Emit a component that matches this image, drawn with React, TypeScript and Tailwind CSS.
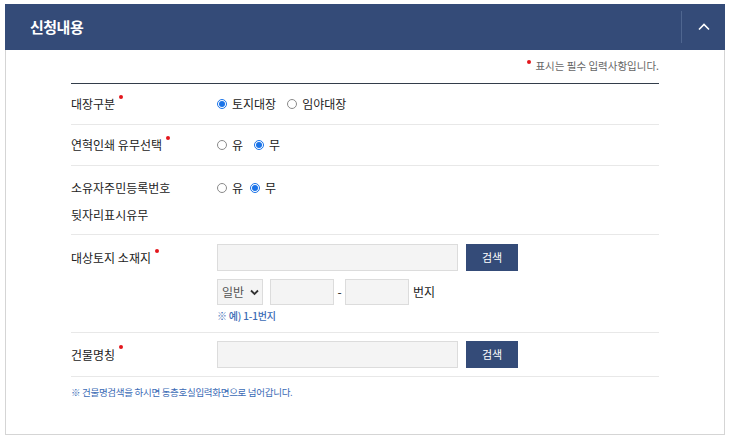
import React from "react";

const Dot = () => (
  <span className="ml-[4px] inline-block h-[4px] w-[4px] -translate-y-[9px] rounded-full bg-[#e3161c] align-middle" />
);

const Radio = ({ checked }: { checked?: boolean }) =>
  checked ? (
    <span className="inline-flex h-[10px] w-[10px] items-center justify-center rounded-full border border-[#1a73e8] bg-white">
      <span className="h-[6px] w-[6px] rounded-full bg-[#1a73e8]" />
    </span>
  ) : (
    <span className="inline-block h-[10px] w-[10px] rounded-full border border-[#8a8a8a] bg-white" />
  );

const Opt = ({ checked, label, gap }: { checked?: boolean; label: string; gap?: string }) => (
  <span className={`inline-flex items-center gap-[5px] ${gap ?? ""}`}>
    <Radio checked={checked} />
    <span>{label}</span>
  </span>
);

export default function App() {
  return (
    <div
      className="h-[442px] w-[729px] bg-white pl-[5px] pt-[4px] text-[12px] text-[#222]"
      style={{ fontFamily: '"Noto Sans CJK KR", "Noto Sans", sans-serif' }}
    >
      <div className="w-[720px] border border-t-0 border-[#d5d5d5]">
        <div className="-mx-px flex h-[46px] items-center bg-[#344b78] pl-[25px]">
          <span className="text-[15px] font-bold tracking-[-0.5px] text-white">신청내용</span>
          <div className="ml-auto flex h-full items-center">
            <div className="h-[32px] w-px bg-[#4f6690]" />
            <div className="flex w-[43px] justify-center">
              <svg width="12" height="8" viewBox="0 0 12 8" fill="none">
                <path d="M1 6.5 L6 1.5 L11 6.5" stroke="white" strokeWidth="1.6" />
              </svg>
            </div>
          </div>
        </div>

        <div className="px-[65px] pb-[34px]">
          <div className="flex h-[34px] items-center justify-end border-b border-[#333d4a] pb-[2px] text-[10.5px] text-[#666]">
            <span className="mr-[4px] inline-block h-[4px] w-[4px] -translate-y-[4px] rounded-full bg-[#e3161c]" />
            표시는 필수 입력사항입니다.
          </div>

          <div className="flex h-[41px] items-center border-b border-[#e8e8e8]">
            <div className="w-[146px]">대장구분<Dot /></div>
            <div className="flex items-center">
              <Opt checked label="토지대장" />
              <Opt label="임야대장" gap="ml-[11px]" />
            </div>
          </div>

          <div className="flex h-[41px] items-center border-b border-[#e8e8e8]">
            <div className="w-[146px]">연혁인쇄 유무선택<Dot /></div>
            <div className="flex items-center">
              <Opt label="유" />
              <Opt checked label="무" gap="ml-[11px]" />
            </div>
          </div>

          <div className="flex h-[69px] items-start border-b border-[#e8e8e8] pt-[8px]">
            <div className="w-[146px] leading-[27px]">
              소유자주민등록번호
              <br />
              뒷자리표시유무
            </div>
            <div className="flex h-[27px] items-center">
              <Opt label="유" />
              <Opt checked label="무" gap="ml-[7px]" />
            </div>
          </div>

          <div className="flex h-[98px] items-start border-b border-[#e8e8e8] pt-[9px]">
            <div className="w-[146px] pt-[5px]">대상토지 소재지<Dot /></div>
            <div className="flex flex-col">
              <div className="flex items-center">
                <div className="h-[27px] w-[241px] border border-[#dcdcdc] bg-[#f4f4f4]" />
                <button className="ml-[8px] h-[27px] w-[52px] bg-[#344b78] text-[11px] text-white">검색</button>
              </div>
              <div className="mt-[8px] flex items-center">
                <div className="flex h-[26px] w-[46px] items-center justify-between border border-[#dcdcdc] bg-[#f4f4f4] pl-[4px] pr-[3px] text-[12px] text-[#555]">
                  일반
                  <svg width="9" height="7" viewBox="0 0 9 7" fill="none">
                    <path d="M1 1.5 L4.5 5 L8 1.5" stroke="#333" strokeWidth="1.8" />
                  </svg>
                </div>
                <div className="ml-[7px] h-[26px] w-[64px] border border-[#dcdcdc] bg-[#f4f4f4]" />
                <span className="w-[11px] text-center text-[12px]">-</span>
                <div className="h-[26px] w-[64px] border border-[#dcdcdc] bg-[#f4f4f4]" />
                <span className="ml-[4px]">번지</span>
              </div>
              <div className="mt-[3px] text-[10px] font-medium tracking-[-0.2px] text-[#3a6ab5]">※ 예) 1-1번지</div>
            </div>
          </div>

          <div className="flex h-[44px] items-center border-b border-[#e8e8e8]">
            <div className="w-[146px]">건물명칭<Dot /></div>
            <div className="h-[27px] w-[241px] border border-[#dcdcdc] bg-[#f4f4f4]" />
            <button className="ml-[8px] h-[27px] w-[52px] bg-[#344b78] text-[11px] text-white">검색</button>
          </div>

          <div className="pt-[8px] text-[9.5px] leading-[15px] tracking-[-0.3px] text-[#3a6ab5]">※ 건물명검색을 하시면 동층호실입력화면으로 넘어갑니다.</div>
        </div>
      </div>
    </div>
  );
}
